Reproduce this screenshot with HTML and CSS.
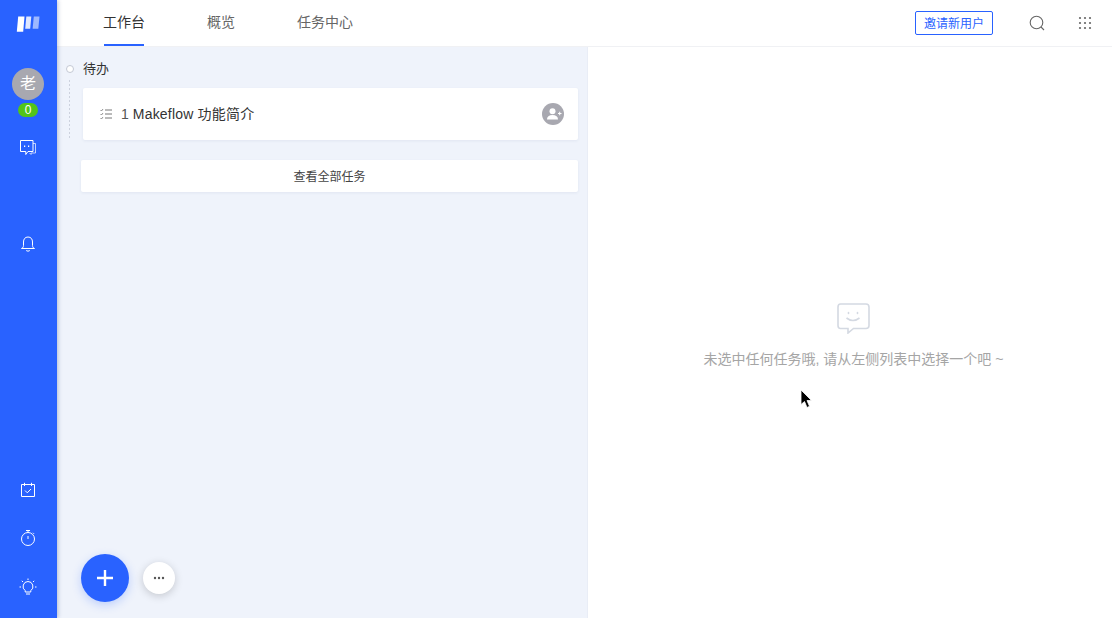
FILE: index.html
```html
<!DOCTYPE html>
<html lang="zh">
<head>
<meta charset="utf-8">
<title>Makeflow</title>
<link rel="stylesheet" href="styles.css">
</head>
<body>
<div class="app">
  <aside class="rail">
    <svg class="logo" width="24" height="18" viewBox="0 0 24 18">
      <path d="M2.200 1.500H8.500L7.200 16.800H.8Z" fill="#fff"/>
      <path d="M10.300 1.500H15.300L14.200 13.800H9.200Z" fill="#fff" opacity=".85"/>
      <path d="M17.800 1.500H23.500L22.300 13.800H16.600Z" fill="#fff" opacity=".55"/>
    </svg>
    <div class="avatar">老</div>
    <div class="count">0</div>
    <svg class="rail-icon chat" width="18" height="18" viewBox="0 0 18 18" fill="none" stroke="#fff" stroke-width="1">
      <path d="M1.500 1.500H14V12.500H9L6.800 15.500V12.500H1.500Z"/>
      <path d="M14 4.500H16.500V14H12V15.500L10.500 14" opacity=".7"/>
      <path d="M5 7.200H6.200M9 7.200H10.200" stroke-width="1.400"/>
    </svg>
    <svg class="rail-icon bell" width="16" height="18" viewBox="0 0 16 18" fill="none" stroke="#fff" stroke-width="1">
      <path d="M8 2C5 2 3.500 4.200 3.500 7V10.500C3.500 12 2.800 12.800 1.500 13.500H14.500C13.200 12.800 12.500 12 12.500 10.500V7C12.500 4.200 11 2 8 2Z"/>
      <path d="M6.200 15.500C7 16.300 9 16.300 9.800 15.500"/>
    </svg>
    <div class="rail-spacer"></div>
    <svg class="rail-icon" width="16" height="16" viewBox="0 0 16 16" fill="none" stroke="#fff" stroke-width="1">
      <path d="M1.500 2.500H14.500V14.500H1.500Z"/>
      <path d="M4.500 .8V4M11.500 .8V4"/>
      <path d="M5 8.500L7.300 10.800L11 7"/>
    </svg>
    <svg class="rail-icon timer" width="16" height="18" viewBox="0 0 16 18" fill="none" stroke="#fff" stroke-width="1">
      <circle cx="8" cy="10" r="6.500"/>
      <path d="M6 1.500H10M8 1.500V3.500M8 7V10M13 3.800L14 4.800"/>
    </svg>
    <svg class="rail-icon bulb" width="18" height="18" viewBox="0 0 18 18" fill="none" stroke="#fff" stroke-width="1">
      <path d="M9 3.500A5 5 0 0 0 6.200 12.600V14H11.800V12.600A5 5 0 0 0 9 3.500Z"/>
      <path d="M7 16H11M9 .5V2M2.800 2.800L4 4M15.200 2.800L14 4M.5 9H2M16 9H17.500"/>
    </svg>
  </aside>
  <div class="main">
    <header class="topbar">
      <nav class="tabs">
        <a class="tab active">工作台</a>
        <a class="tab">概览</a>
        <a class="tab">任务中心</a>
      </nav>
      <div class="actions">
        <button class="invite">邀请新用户</button>
        <svg class="search" width="16" height="16" viewBox="0 0 16 16" fill="none" stroke="#666" stroke-width="1.100">
          <circle cx="7.500" cy="7.500" r="6.300"/>
          <path d="M12 12L15 15"/>
        </svg>
        <svg class="grid" width="14" height="14" viewBox="0 0 14 14" fill="#666">
          <circle cx="2" cy="2" r="1.100"/><circle cx="7" cy="2" r="1.100"/><circle cx="12" cy="2" r="1.100"/>
          <circle cx="2" cy="7" r="1.100"/><circle cx="7" cy="7" r="1.100"/><circle cx="12" cy="7" r="1.100"/>
          <circle cx="2" cy="12" r="1.100"/><circle cx="7" cy="12" r="1.100"/><circle cx="12" cy="12" r="1.100"/>
        </svg>
      </div>
    </header>
    <div class="content">
      <section class="list">
        <div class="group-head"><span class="dot"></span><span class="group-name">待办</span></div>
        <div class="group-body">
          <div class="task">
            <svg class="task-icon" width="12" height="12" viewBox="0 0 12 12" fill="none" stroke="#777" stroke-width="1">
              <path d="M.5 2L1.500 3L3 1M.5 6L1.500 7L3 5M.5 10L1.500 11L3 9" stroke-width=".8"/>
              <path d="M5 2H12M5 6H12M5 10H12"/>
            </svg>
            <span class="task-no">1</span>
            <span class="task-title">Makeflow 功能简介</span>
            <span class="assign">
              <svg width="16" height="12" viewBox="0 0 16 12" fill="#fff">
                <circle cx="6.500" cy="3.200" r="3"/>
                <path d="M1 11.500C1 8.500 3 7 6.500 7S12 8.500 12 11.500Z"/>
                <path d="M12 5H13.200V3.700H14.200V5H15.500V6H14.200V7.300H13.200V6H12Z"/>
              </svg>
            </span>
          </div>
        </div>
        <div class="view-all">查看全部任务</div>
        <div class="fabs">
          <button class="fab-add">
            <svg width="18" height="18" viewBox="0 0 18 18" stroke="#fff" stroke-width="2.400"><path d="M9 1V17M1 9H17"/></svg>
          </button>
          <button class="fab-more">
            <svg width="12" height="4" viewBox="0 0 12 4" fill="#555"><circle cx="2" cy="2" r="1.200"/><circle cx="6" cy="2" r="1.200"/><circle cx="10" cy="2" r="1.200"/></svg>
          </button>
        </div>
      </section>
      <section class="detail">
        <svg class="empty-icon" width="33" height="31" viewBox="0 0 33 31" fill="none" stroke="#d4d9e2" stroke-width="1.600">
          <path d="M3.500 1H29Q32 1 32 4V22.500Q32 25.500 29 25.500H16.500L11 30V25.500H3.500Q1 25.500 1 22.500V4Q1 1 3.500 1Z"/>
          <path d="M11.500 9.500V10.500M20.500 9.500V10.500" stroke-linecap="round"/>
          <path d="M9.500 15Q16 20 22.500 15"/>
        </svg>
        <p class="empty-text">未选中任何任务哦, 请从左侧列表中选择一个吧 ~</p>
      </section>
    </div>
  </div>
</div>
<svg class="cursor" width="13" height="20" viewBox="0 0 13 20"><path d="M1 1V15.500L4.500 12.500L7 18.500L9.500 17.300L7 11.500H11.500Z" fill="#000" stroke="#fff" stroke-width=".8"/></svg>
</body>
</html>
```
FILE: styles.css
```css
* { box-sizing: border-box; }
html, body { margin: 0; height: 100%; overflow: hidden; }
body {
  font-family: "Liberation Sans", "Noto Sans CJK SC", sans-serif;
  color: #333;
  background: #fff;
}
.app { display: flex; height: 618px; width: 1112px; }
.rail {
  width: 57px;
  flex: none;
  background: #2962ff;
  box-shadow: 1px 0 4px rgba(40, 60, 120, .3);
  display: flex;
  flex-direction: column;
  align-items: center;
  padding: 15px 1px 0 0;
  position: relative;
  z-index: 2;
}
.logo { display: block; flex: none; margin-right: 1px; }
.avatar {
  width: 32px;
  height: 32px;
  flex: none;
  margin-top: 35px;
  border-radius: 50%;
  background: #a8a8b0;
  color: #fff;
  font-size: 16px;
  line-height: 32px;
  text-align: center;
}
.count {
  width: 20px;
  height: 14px;
  flex: none;
  margin-top: 3px;
  border-radius: 7px;
  background: #52c41a;
  color: #fff;
  font-size: 12px;
  line-height: 14px;
  text-align: center;
}
.rail-icon { display: block; flex: none; }
.chat { margin-top: 22px; }
.bell { margin-top: 78px; }
.rail-spacer { flex: 1; }
.timer { margin-top: 31px; }
.bulb { margin: 31px 0 22px; }
.main { flex: 1; min-width: 0; display: flex; flex-direction: column; }
.topbar {
  height: 47px;
  flex: none;
  display: flex;
  justify-content: space-between;
  align-items: stretch;
  padding: 0 20px 0 46px;
  border-bottom: 1px solid #f0f1f4;
  background: #fff;
}
.tabs { display: flex; gap: 62px; }
.tab {
  position: relative;
  font-size: 14px;
  line-height: 45px;
  color: #666;
  white-space: nowrap;
}
.tab.active { color: #333; }
.tab.active::after {
  content: "";
  position: absolute;
  left: 1px;
  right: 1px;
  bottom: 0;
  height: 2px;
  background: #2962ff;
}
.actions { display: flex; align-items: center; padding-bottom: 1px; }
.invite {
  width: 78px;
  height: 24px;
  padding: 0;
  border: 1px solid #2962ff;
  border-radius: 2px;
  background: #fff;
  color: #2962ff;
  font: 12px "Liberation Sans", "Noto Sans CJK SC", sans-serif;
}
.search { margin-left: 36px; }
.grid { margin-left: 33px; }
.content { flex: 1; display: flex; min-height: 0; }
.list {
  width: 531px;
  flex: none;
  background: #eff3fb;
  border-right: 1px solid #e9edf6;
  padding: 13px 9px 0 8px;
  position: relative;
}
.group-head {
  display: flex;
  align-items: flex-start;
  height: 18px;
  font-size: 13px;
  color: #333;
}
.group-name { line-height: 18px; }
.dot {
  width: 8px;
  height: 8px;
  flex: none;
  margin-top: 5px;
  border-radius: 50%;
  border: 1px solid #c4c9d4;
  background: #fff;
  margin-left: 1px;
  margin-right: 9px;
}
.group-body {
  margin: 2px 0 0 4px;
  padding: 8px 0 0 14px;
  background: linear-gradient(#cdd2de 50%, transparent 50%) left top / 1px 4px repeat-y;
}
.task {
  height: 52px;
  background: #fff;
  border-radius: 2px;
  box-shadow: 0 1px 3px rgba(60, 80, 130, .08);
  display: flex;
  align-items: center;
  padding: 0 14px 0 17px;
}
.task-icon { flex: none; }
.task-no { margin-left: 9px; font-size: 14px; line-height: 18px; margin-top: -1px; color: #555; }
.task-title { margin-left: 4px; font-size: 14px; line-height: 18px; margin-top: -1px; letter-spacing: .2px; color: #333; flex: 1; }
.assign {
  width: 22px;
  height: 22px;
  border-radius: 50%;
  background: #a8a8b0;
  display: flex;
  align-items: center;
  justify-content: center;
}
.assign svg { display: block; margin-left: 1px; }
.view-all {
  height: 32px;
  margin: 20px 0 0 16px;
  background: #fff;
  border-radius: 2px;
  box-shadow: 0 1px 3px rgba(60, 80, 130, .08);
  font-size: 12px;
  line-height: 34px;
  text-align: center;
  color: #444;
}
.fabs {
  position: absolute;
  left: 24px;
  bottom: 16px;
  display: flex;
  align-items: center;
  gap: 14px;
}
.fab-add {
  width: 48px;
  height: 48px;
  padding: 0;
  border: 0;
  border-radius: 50%;
  background: #2962ff;
  box-shadow: 0 3px 10px rgba(41, 98, 255, .25);
  display: flex;
  align-items: center;
  justify-content: center;
}
.fab-more {
  width: 32px;
  height: 32px;
  padding: 0;
  border: 0;
  border-radius: 50%;
  background: #fff;
  box-shadow: 0 2px 8px rgba(0, 0, 0, .18);
  display: flex;
  align-items: center;
  justify-content: center;
}
.detail {
  flex: 1;
  min-width: 0;
  display: flex;
  flex-direction: column;
  align-items: center;
  padding: 256px 0 0 7px;
  background: #fff;
}
.empty-icon { display: block; }
.empty-text {
  margin: 16px 0 0;
  font-size: 14px;
  line-height: 18px;
  color: #a5a5a5;
  white-space: nowrap;
}
.cursor { position: absolute; left: 800px; top: 389px; z-index: 5; }
```
